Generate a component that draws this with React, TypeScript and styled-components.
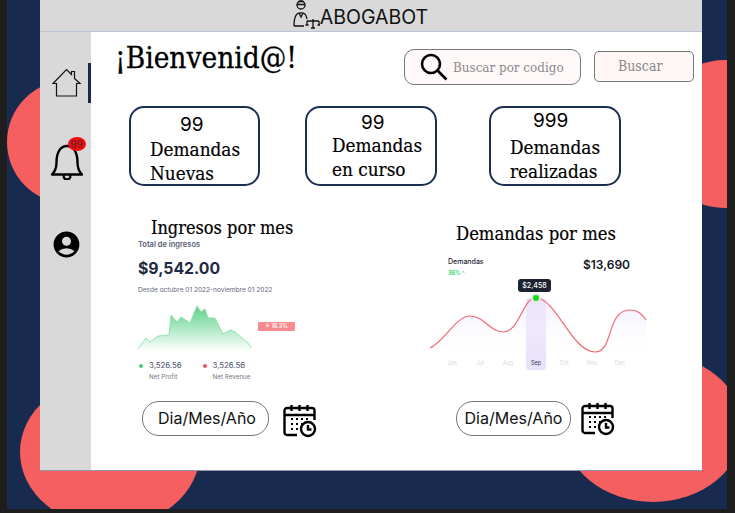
import styled, { createGlobalStyle } from "styled-components";
import { MdAccountCircle } from "react-icons/md";

const SERIF = `"DejaVu Serif Condensed", "DejaVu Serif", serif`;
const SANS = `Inter, "Liberation Sans", sans-serif`;

const months = ["Jun", "Jul", "Aug", "Sep", "Oct", "Nov", "Dec"];

const App = () => {
  return (
    <>
      <GlobalStyle />
      <Canvas>
        <Blob $x={7} $y={80} $w={124} $h={124} />
        <Blob $x={20} $y={377} $w={180} $h={150} />
        <Blob $x={651} $y={60} $w={148} $h={148} />
        <Blob $x={563} $y={354} $w={180} $h={148} />
        <Frame>
          <TopBar>
            <LawyerLogo />
            <Brand>ABOGABOT</Brand>
          </TopBar>
          <Body>
            <Sidebar>
              <NavItem $active $height={40} $top={0}>
                <HomeIcon />
              </NavItem>
              <NavItem $height={46} $top={36}>
                <BellWrap>
                  <BellIcon />
                  <Badge>99</Badge>
                </BellWrap>
              </NavItem>
              <NavItem $height={34} $top={42}>
                <MdAccountCircle size={31} color="#000" />
              </NavItem>
            </Sidebar>
            <Main>
              <Header>
                <Title>¡Bienvenid@!</Title>
                <SearchBox>
                  <SearchIcon />
                  <SearchText>Buscar por codigo</SearchText>
                </SearchBox>
                <SearchButton>Buscar</SearchButton>
              </Header>
              <Stats>
                <StatCard $left={0} $width={131} $lift={0}>
                  <StatNumber $indent={49}>99</StatNumber>
                  <StatLabel $indent={19} $gap={1}>
                    Demandas
                    <br />
                    Nuevas
                  </StatLabel>
                </StatCard>
                <StatCard $left={45} $width={132} $lift={2}>
                  <StatNumber $indent={54}>99</StatNumber>
                  <StatLabel $indent={25} $gap={-1}>
                    Demandas
                    <br />
                    en curso
                  </StatLabel>
                </StatCard>
                <StatCard $left={52} $width={132} $lift={4}>
                  <StatNumber $indent={42}>999</StatNumber>
                  <StatLabel $indent={19} $gap={3}>
                    Demandas
                    <br />
                    realizadas
                  </StatLabel>
                </StatCard>
              </Stats>
              <Charts>
                <IncomePanel>
                  <IncomeTitle>Ingresos por mes</IncomeTitle>
                  <SmallHeading>Total de ingresos</SmallHeading>
                  <Amount>$9,542.00</Amount>
                  <DateRange>Desde octubre 01 2022-noviembre 01 2022</DateRange>
                  <AreaRow>
                    <IncomeChart />
                    <DropBadge>↓ 16.3%</DropBadge>
                  </AreaRow>
                  <Legend>
                    <LegendItem>
                      <LegendValue>
                        <Dot $color="#3fd070" />
                        3,526.56
                      </LegendValue>
                      <LegendName>Net Profit</LegendName>
                    </LegendItem>
                    <LegendItem>
                      <LegendValue>
                        <Dot $color="#f2545b" />
                        3,526.56
                      </LegendValue>
                      <LegendName>Net Revenue</LegendName>
                    </LegendItem>
                  </Legend>
                  <RangeRow $top={17} $left={4} $gap={14} $iconDrop={6}>
                    <RangePill $width={127} $shift={3}>
                      Dia/Mes/Año
                    </RangePill>
                    <CalendarIcon />
                  </RangeRow>
                </IncomePanel>
                <DemandPanel>
                  <DemandTitle>Demandas por mes</DemandTitle>
                  <DemandHead>
                    <div>
                      <DemandLabel>Demandas</DemandLabel>
                      <DemandDelta>36% ^</DemandDelta>
                    </div>
                    <DemandTotal>$13,690</DemandTotal>
                  </DemandHead>
                  <CurveBox>
                    <MonthBand />
                    <CurveChart />
                    <Tip>$2,458</Tip>
                    <Months>
                      {months.map((m) => (
                        <Month key={m} $active={m === "Sep"}>
                          {m}
                        </Month>
                      ))}
                    </Months>
                  </CurveBox>
                  <RangeRow $top={31} $left={26} $gap={10} $iconDrop={0}>
                    <RangePill $width={115} $shift={0}>
                      Dia/Mes/Año
                    </RangePill>
                    <CalendarIcon />
                  </RangeRow>
                </DemandPanel>
              </Charts>
            </Main>
          </Body>
        </Frame>
      </Canvas>
    </>
  );
};

export default App;

const LawyerLogo = () => (
  <svg width="27" height="29" viewBox="0 0 27 29" fill="none" stroke="#111" strokeWidth="1.3">
    <circle cx="8" cy="5" r="4" />
    <path d="M4 4.500h8M5.500 1.500l5 0" />
    <path d="M1 26c0-4 1-10 3-12 2-1.500 6-1.500 8 0 1 1 1.500 3 2 5" />
    <path d="M1 26h10M6 13l2 4 2-4" />
    <path d="M14 21h12M20 19v9M18 28h4M14 21v4M26 21v4M12.500 25h3M24.500 25h3" />
  </svg>
);

const HomeIcon = () => (
  <svg width="30" height="30" viewBox="0 0 30 30" fill="none" stroke="#111" strokeWidth="1.2">
    <path d="M1 15.500 14.500 1.500l5 5V3.500h3v7l5.500 5h-3.500v12.500H4.500V15.500z" />
  </svg>
);

const BellIcon = () => (
  <svg width="34" height="36" viewBox="0 0 34 36" fill="none" stroke="#000" strokeWidth="2.4" strokeLinejoin="round">
    <path d="M2 30.500h30c-3-3-4.500-6-4.500-12C27.500 8 23.500 2 17 2S6.500 8 6.500 18.500c0 6-1.500 9-4.500 12z" />
    <path d="M13.500 31c0 6 7 6 7 0" />
  </svg>
);

const SearchIcon = () => (
  <svg width="28" height="28" viewBox="0 0 28 28" fill="none" stroke="#000" strokeWidth="2.6">
    <circle cx="11" cy="11" r="9" />
    <path d="m17.500 17.500 9 9" />
  </svg>
);

const CalendarIcon = () => (
  <svg width="34" height="34" viewBox="0 0 34 34" fill="none" stroke="#000" strokeWidth="2.4">
    <path d="M14 31H4a2.500 2.500 0 0 1-2.500-2.500V6.500A2.500 2.500 0 0 1 4 4h25a2.500 2.500 0 0 1 2.500 2.500V16" />
    <path d="M1.500 11h30M8.500 1v6M16.500 1v6M24.500 1v6" />
    <circle cx="25" cy="25" r="7" />
    <path d="M25 21v4.500h3.500" />
    <path
      d="M8 15h2M13 15h2M18 15h2M23 15h2M8 20h2M13 20h2M18 20h2M8 25h2M13 25h2"
      strokeWidth="1.800"
    />
  </svg>
);

const IncomeChart = () => {
  const line =
    "M0 44L8 33L12 37L20 31L31 30L33 10L39 17L43 12L52 18L59 1L63 7L67 4L70 13L77 13L85 29L92 25L97 27L110 38L113 43";
  return (
    <svg width="115" height="46" viewBox="0 0 115 46">
      <defs>
        <linearGradient id="incomeFill" x1="0" y1="0" x2="0" y2="1">
          <stop offset="0" stopColor="#5ed189" />
          <stop offset="1" stopColor="#5ed189" stopOpacity="0" />
        </linearGradient>
      </defs>
      <path d={`${line}V46H0Z`} fill="url(#incomeFill)" />
      <path d={line} fill="none" stroke="#7fdca2" strokeWidth="0.8" />
    </svg>
  );
};

const CurveChart = () => {
  const line =
    "M0 70C14 64 26 38 40 38C54 38 60 54 73 54C90 54 92 20 106 20C126 20 142 74 165 74C184 74 176 32 200 32C208 32 212 36 216 42";
  return (
    <CurveSvg width="216" height="84" viewBox="0 0 216 84">
      <defs>
        <linearGradient id="curveFill" x1="0" y1="0" x2="0" y2="1">
          <stop offset="0" stopColor="#ece5fb" stopOpacity="0.7" />
          <stop offset="1" stopColor="#ffffff" stopOpacity="0" />
        </linearGradient>
      </defs>
      <path d={`${line}V84H0Z`} fill="url(#curveFill)" />
      <path d={line} fill="none" stroke="#ef6a70" strokeWidth="1.2" />
      <circle cx="106" cy="20" r="5" fill="#e8e2f8" />
      <circle cx="106" cy="20" r="3" fill="#10e010" />
    </CurveSvg>
  );
};

const GlobalStyle = createGlobalStyle`
  html, body {
    margin: 0;
    padding: 0;
    background: #1e1e1e;
  }
`;

const Canvas = styled.div`
  position: relative;
  width: 720px;
  height: 509px;
  margin-left: 7px;
  background: #182b4f;
  overflow: hidden;
  box-sizing: border-box;
  padding: 0 25px 0 33px;
`;

const Blob = styled.div<{ $x: number; $y: number; $w: number; $h: number }>`
  position: absolute;
  left: ${(p) => p.$x - 7}px;
  top: ${(p) => p.$y}px;
  width: ${(p) => p.$w}px;
  height: ${(p) => p.$h}px;
  border-radius: 50%;
  background: #f55f5f;
`;

const Frame = styled.div`
  position: relative;
  display: flex;
  flex-direction: column;
  height: 471px;
  border-bottom: 1px solid #8d96ab;
  box-sizing: border-box;
`;

const TopBar = styled.header`
  display: flex;
  align-items: flex-start;
  justify-content: center;
  height: 32px;
  flex: none;
  padding-right: 21px;
  box-sizing: border-box;
  background: #d9d9d9;
  border-bottom: 1px solid #bcc5d2;
`;

const Brand = styled.span`
  margin-top: 3px;
  font: 400 19.500px/28px ${SANS};
  color: #111;
`;

const Body = styled.div`
  display: flex;
  flex: 1;
  min-height: 0;
  background: #fff;
`;

const Sidebar = styled.nav`
  display: flex;
  flex-direction: column;
  width: 51px;
  flex: none;
  padding-top: 31px;
  box-sizing: border-box;
  background: #d9d9d9;
`;

const NavItem = styled.div<{ $active?: boolean; $height: number; $top: number }>`
  display: flex;
  align-items: center;
  justify-content: center;
  height: ${(p) => p.$height}px;
  margin-top: ${(p) => p.$top}px;
  padding-left: 5px;
  border-right: 3px solid ${(p) => (p.$active ? "#182b4f" : "transparent")};
`;

const BellWrap = styled.div`
  position: relative;
  display: flex;
`;

const Badge = styled.span`
  position: absolute;
  top: -7px;
  right: -2px;
  width: 18px;
  height: 14px;
  border-radius: 50%;
  background: #f80a0a;
  font: 400 10px/14px ${SANS};
  text-align: center;
  color: #333;
`;

const Main = styled.main`
  flex: 1;
  min-width: 0;
  display: flex;
  flex-direction: column;
`;

const Header = styled.div`
  display: flex;
  align-items: flex-start;
  padding: 7px 8px 0 24px;
  height: 74px;
  box-sizing: border-box;
`;

const Title = styled.h1`
  margin: 0 auto 0 0;
  font: 400 29.500px/38px ${SERIF};
  -webkit-text-stroke: 0.3px #000;
  color: #000;
`;

const SearchBox = styled.div`
  display: flex;
  align-items: center;
  gap: 5px;
  width: 177px;
  height: 36px;
  margin-top: 10px;
  padding-left: 15px;
  box-sizing: border-box;
  background: #fef9f8;
  border: 1px solid #777;
  border-radius: 10px;
`;

const SearchText = styled.span`
  font: 400 13.300px ${SERIF};
  color: #8b8b8b;
  white-space: nowrap;
`;

const SearchButton = styled.div`
  width: 100px;
  height: 31px;
  margin: 12px 0 0 13px;
  padding-left: 23px;
  box-sizing: border-box;
  background: #fef7f6;
  border: 1px solid #777;
  border-radius: 5px;
  font: 400 14px/28px ${SERIF};
  color: #888;
`;

const Stats = styled.section`
  display: flex;
  padding-left: 38px;
`;

const StatCard = styled.div<{ $left: number; $width: number; $lift: number }>`
  width: ${(p) => p.$width}px;
  height: 80px;
  flex: none;
  margin-left: ${(p) => p.$left}px;
  box-sizing: border-box;
  padding-top: ${(p) => 5 - p.$lift}px;
  border: 2px solid #1c2f52;
  border-radius: 15px;
  background: #fff;
  color: #000;
`;

const StatNumber = styled.div<{ $indent: number }>`
  padding-left: ${(p) => p.$indent}px;
  font: 400 19px/24px ${SANS};
`;

const StatLabel = styled.div<{ $indent: number; $gap: number }>`
  margin-top: ${(p) => p.$gap}px;
  padding-left: ${(p) => p.$indent}px;
  font: 400 18.800px/24px ${SERIF};
  -webkit-text-stroke: 0.2px #000;
`;

const Charts = styled.section`
  display: grid;
  grid-template-columns: 339px 1fr;
  margin-top: 26px;
`;

const IncomePanel = styled.div`
  display: flex;
  flex-direction: column;
  padding-left: 47px;
  padding-top: 4px;
`;

const IncomeTitle = styled.h2`
  margin: 0 0 0 13px;
  font: 400 18px/24px ${SERIF};
  -webkit-text-stroke: 0.2px #000;
  color: #000;
`;

const SmallHeading = styled.div`
  font: 600 7.500px/10px ${SANS};
  color: #545c70;
`;

const Amount = styled.div`
  margin-top: 9px;
  font: 700 15.800px/20px ${SANS};
  color: #1f2a44;
`;

const DateRange = styled.div`
  margin-top: 7px;
  font: 400 6.550px/8px ${SANS};
  color: #5f6779;
`;

const AreaRow = styled.div`
  position: relative;
  margin-top: 11px;
  height: 46px;
`;

const DropBadge = styled.span`
  position: absolute;
  top: 17px;
  left: 120px;
  width: 37px;
  height: 9px;
  border-radius: 1px;
  background: #f98a8d;
  font: 600 5.500px/9px ${SANS};
  text-align: center;
  color: #fff;
`;

const Legend = styled.div`
  display: flex;
  gap: 20px;
  margin-top: 9px;
`;

const LegendItem = styled.div`
  display: flex;
  flex-direction: column;
`;

const LegendValue = styled.div`
  display: flex;
  align-items: center;
  gap: 6px;
  margin-left: 1px;
  font: 400 7.800px/11px ${SANS};
  color: #49506a;
`;

const Dot = styled.span<{ $color: string }>`
  width: 4px;
  height: 4px;
  border-radius: 50%;
  background: ${(p) => p.$color};
`;

const LegendName = styled.div`
  margin: 2px 0 0 11px;
  font: 400 6.300px/8px ${SANS};
  color: #6f7687;
`;

const RangeRow = styled.div<{ $top: number; $left: number; $gap: number; $iconDrop: number }>`
  display: flex;
  align-items: center;
  gap: ${(p) => p.$gap}px;
  margin: ${(p) => p.$top}px 0 0 ${(p) => p.$left}px;
  svg {
    margin-top: ${(p) => p.$iconDrop}px;
  }
`;

const RangePill = styled.div<{ $width: number; $shift: number }>`
  width: ${(p) => p.$width}px;
  height: 35px;
  box-sizing: border-box;
  padding-left: ${(p) => p.$shift}px;
  border: 1px solid #777;
  border-radius: 17px;
  background: #fff;
  font: 400 16px/33px ${SANS};
  text-align: center;
  color: #111;
`;

const DemandPanel = styled.div`
  display: flex;
  flex-direction: column;
  padding-top: 10px;
`;

const DemandTitle = styled.h2`
  margin: 0 0 0 26px;
  font: 400 18.250px/24px ${SERIF};
  -webkit-text-stroke: 0.2px #000;
  color: #000;
`;

const DemandHead = styled.div`
  display: flex;
  justify-content: space-between;
  width: 182px;
  margin: 11px 0 0 18px;
`;

const DemandLabel = styled.div`
  font: 500 7px/10px ${SANS};
  color: #1f2433;
`;

const DemandDelta = styled.div`
  margin-top: 2px;
  font: 700 5.500px/8px ${SANS};
  color: #35d678;
`;

const DemandTotal = styled.div`
  font: 600 12px/16px ${SANS};
  color: #15171f;
`;

const CurveBox = styled.div`
  position: relative;
  width: 216px;
  height: 92px;
  margin-top: 1px;
`;

const CurveSvg = styled.svg`
  position: absolute;
  left: 0;
  top: 0;
`;

const MonthBand = styled.div`
  position: absolute;
  left: 96px;
  top: 20px;
  width: 20px;
  height: 72px;
  border-radius: 3px;
  background: #e9e2fb;
`;

const Tip = styled.div`
  position: absolute;
  left: 88px;
  top: 1px;
  width: 33px;
  height: 13px;
  border-radius: 3px;
  background: #1d2230;
  font: 500 7px/13px ${SANS};
  text-align: center;
  color: #fff;
`;

const Months = styled.div`
  position: absolute;
  left: 8px;
  top: 80px;
  display: flex;
`;

const Month = styled.span<{ $active?: boolean }>`
  width: 28px;
  font: 400 5.500px/10px ${SANS};
  text-align: center;
  color: ${(p) => (p.$active ? "#33394a" : "#d5d8e2")};
`;
